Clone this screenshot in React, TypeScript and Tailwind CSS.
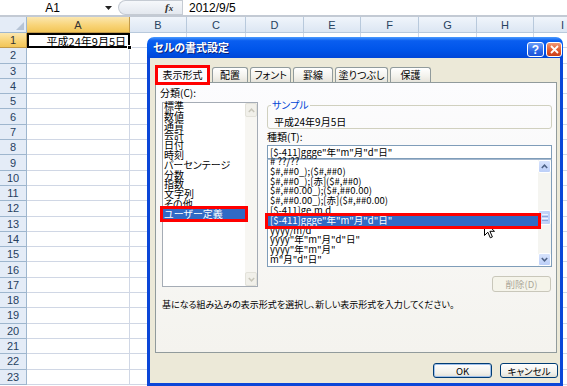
import React from "react";

const cols = [
  { l: "A", c: "w-[103px]" },
  { l: "B", c: "w-[57px]" },
  { l: "C", c: "w-[59px]" },
  { l: "D", c: "w-[58px]" },
  { l: "E", c: "w-[57px]" },
  { l: "F", c: "w-[58px]" },
  { l: "G", c: "w-[58px]" },
  { l: "H", c: "w-[57px]" },
  { l: "I", c: "w-[58px]" },
];

const rows = Array.from({ length: 23 }, (_, i) => i + 1);

const categories = [
  "標準",
  "数値",
  "通貨",
  "会計",
  "日付",
  "時刻",
  "パーセンテージ",
  "分数",
  "指数",
  "文字列",
  "その他",
  "ユーザー定義",
];

const types = [
  "# ??/??",
  "$#,##0_);($#,##0)",
  "$#,##0_);[赤]($#,##0)",
  "$#,##0.00_);($#,##0.00)",
  "$#,##0.00_);[赤]($#,##0.00)",
  "[$-411]ge.m.d",
  '[$-411]ggge"年"m"月"d"日"',
  "yyyy/m/d",
  'yyyy"年"m"月"d"日"',
  'yyyy"年"m"月"',
  'm"月"d"日"',
];

function Chevron({ up, color }: { up: boolean; color: string }) {
  return (
    <svg width="7" height="5" viewBox="0 0 7 5">
      <polyline
        points={up ? "0.8,4 3.5,1.2 6.2,4" : "0.8,1 3.5,3.8 6.2,1"}
        fill="none"
        stroke={color}
        strokeWidth="1.5"
      />
    </svg>
  );
}

function Tab({ label, w }: { label: string; w: string }) {
  return (
    <div
      className={`${w} h-[15px] flex items-center justify-center border border-b-0 border-[#919b9c] rounded-t-[3px] bg-[linear-gradient(to_bottom,#ffffff,#f3f2ec_60%,#e6e4db)] text-[10px] leading-[12px] text-black`}
    >
      {label}
    </div>
  );
}

export default function App() {
  return (
    <div className="relative w-[567px] h-[386px] overflow-hidden bg-white font-['Noto_Sans_CJK_JP',sans-serif] [font-feature-settings:'palt']">
      {/* formula bar */}
      <div className="h-[15px] flex items-center bg-white">
        <div className="w-[101px] text-center text-[12px] leading-[14px] font-['Liberation_Sans',sans-serif] text-black pl-[4px]">
          A1
        </div>
        <svg width="7" height="4" viewBox="0 0 7 4" className="ml-[4px]">
          <polygon points="0,0 7,0 3.5,4" fill="#222" />
        </svg>
        <div className="ml-[6px] h-[15px] w-[64px] flex items-center rounded-l-full border border-r-0 border-[#c5cbd3] bg-[linear-gradient(to_bottom,#f6f8fb,#e3e8ef)]">
          <span className="ml-[46px] text-[11px] leading-[12px] italic font-bold font-['Liberation_Serif',serif] text-[#333]">
            f<span className="text-[9px]">x</span>
          </span>
        </div>
        <div className="h-[15px] w-px bg-[#c5cbd3]" />
        <span className="ml-[6px] text-[12px] leading-[14px] font-['Liberation_Sans',sans-serif] text-black">
          2012/9/5
        </span>
      </div>
      <div className="h-[2px] bg-[#c3cad4]" />

      {/* header row */}
      <div className="flex h-[16px] font-['Liberation_Sans',sans-serif]">
        <div className="w-[27px] shrink-0 bg-[#e4ecf7] border-r border-b border-[#9eb6ce] flex items-end justify-end pr-[2px] pb-[2px]">
          <svg width="8" height="8" viewBox="0 0 8 8">
            <polygon points="8,0 8,8 0,8" fill="#b6c4d6" />
          </svg>
        </div>
        {cols.map((c) => (
          <div
            key={c.l}
            className={`${c.c} shrink-0 flex items-center justify-center text-[11px] leading-[12px] border-r border-b ${
              c.l === "A"
                ? "bg-[linear-gradient(to_bottom,#fbe7b0,#f8d478_55%,#f2c557)] border-[#c29a49] text-[#333]"
                : "bg-[linear-gradient(to_bottom,#f0f5fb,#dce6f3)] border-[#b8c9dc] text-[#27415f]"
            }`}
          >
            {c.l}
          </div>
        ))}
      </div>

      {/* grid rows */}
      {rows.map((r) => (
        <div key={r} className="flex h-[15.3px]">
          <div
            className={`w-[27px] shrink-0 flex items-center justify-center text-[11px] leading-[12px] font-['Liberation_Sans',sans-serif] border-r border-b ${
              r === 1
                ? "bg-[linear-gradient(to_bottom,#fbe7b0,#f8d478_55%,#f2c557)] border-[#c29a49] text-[#333]"
                : "bg-[#e4ecf7] border-[#9eb6ce] text-[#27415f]"
            }`}
          >
            {r}
          </div>
          {cols.map((c) =>
            r === 1 && c.l === "A" ? (
              <div
                key={c.l}
                className={`${c.c} shrink-0 relative border-2 border-black flex items-center justify-end pr-[2px] text-[11px] leading-[12px] text-black [font-feature-settings:normal]`}
              >
                平成24年9月5日
                <div className="absolute right-[-4px] bottom-[-4px] w-[5px] h-[5px] bg-black border border-white" />
              </div>
            ) : (
              <div key={c.l} className={`${c.c} shrink-0 border-r border-b border-[#d0d7e5]`} />
            )
          )}
        </div>
      ))}

      {/* dialog */}
      <div className="absolute left-[147px] top-[37px] w-[416px] h-[349px] flex flex-col">
        {/* title bar */}
        <div className="h-[21px] shrink-0 rounded-t-[7px] bg-[linear-gradient(to_bottom,#4a9bff,#0a5ef0_18%,#0055ea_60%,#0046d8)] flex items-center pr-[1px]">
          <span className="pl-[6px] text-[11px] leading-[13px] font-bold text-white [text-shadow:1px_1px_0_#0a1f7a] flex-1">
            セルの書式設定
          </span>
          <div className="self-end mb-[1px] flex gap-[2px]">
            <div className="w-[17px] h-[15px] rounded-[3px] border border-white bg-[linear-gradient(to_bottom,#6a9cf8,#2c68e8_60%,#1d53d6)] flex items-center justify-center text-white text-[12px] leading-[12px] font-bold font-['Liberation_Sans',sans-serif]">
              ?
            </div>
            <div className="w-[16px] h-[15px] rounded-[3px] border border-white bg-[linear-gradient(to_bottom,#f09a78,#e2582c_55%,#c8401c)] flex items-center justify-center">
              <svg width="9" height="9" viewBox="0 0 9 9">
                <path d="M1 1 L8 8 M8 1 L1 8" stroke="white" strokeWidth="1.8" />
              </svg>
            </div>
          </div>
        </div>

        {/* body */}
        <div className="flex-1 bg-[#ece9d8] border-x-[3px] border-b-[3px] border-[#0b46d8] flex flex-col">
          {/* tabs */}
          <div className="mt-[7px] h-[17px] flex items-end pl-[5px] gap-[2px]">
            <div className="ml-[3px] mr-[3px] w-[49px] h-[14px] flex items-center justify-center bg-[#fcfcfe] text-[10px] leading-[12px] text-black outline-[3px] outline-solid outline-[#ff0000] relative z-10">
              表示形式
            </div>
            <Tab label="配置" w="w-[36px]" />
            <Tab label="フォント" w="w-[41px]" />
            <Tab label="罫線" w="w-[40px]" />
            <Tab label="塗りつぶし" w="w-[53px]" />
            <Tab label="保護" w="w-[41px]" />
          </div>

          {/* panel */}
          <div className="ml-[5px] w-[402px] h-[271px] border border-[#919b9c] bg-[linear-gradient(to_bottom,#fcfcfe,#f4f3ee)] pt-[4px] pl-[4px] flex flex-col">
            <div className="h-[205px] flex">
              {/* left column */}
              <div className="w-[98px] flex flex-col">
                <div className="h-[12px] text-[10px] leading-[12px] text-black">分類(C):</div>
                <div className="ml-[2px] mt-[3px] w-[96px] h-[185px] border border-[#a5acb5] bg-white flex">
                  <div className="flex-1 flex flex-col -mt-[2px]">
                    {categories.map((c) => (
                      <div
                        key={c}
                        className={`h-[9.8px] leading-[9.8px] text-[10px] pl-[1px] whitespace-nowrap ${
                          c === "ユーザー定義"
                            ? "bg-[#316ac5] text-white outline-[3px] outline-solid outline-[#ff0000] relative z-10"
                            : "text-black"
                        }`}
                      >
                        {c}
                      </div>
                    ))}
                  </div>
                  <div className="w-[12px] flex flex-col bg-[#f7f6f2]">
                    <div className="h-[14px] border border-[#e3e2da] rounded-[2px] bg-[#f1f0ea] flex items-center justify-center">
                      <Chevron up color="#c9c7bb" />
                    </div>
                    <div className="flex-1" />
                    <div className="h-[14px] border border-[#e3e2da] rounded-[2px] bg-[#f1f0ea] flex items-center justify-center">
                      <Chevron up={false} color="#c9c7bb" />
                    </div>
                  </div>
                </div>
              </div>

              {/* right column */}
              <div className="ml-[9px] w-[285px] flex flex-col">
                <fieldset className="mt-[12px] h-[30px] border border-[#d0d0bf] rounded-[3px]">
                  <legend className="ml-[3px] px-[1px] text-[10px] leading-[12px] text-[#0046d5]">サンプル</legend>
                  <div className="pl-[6px] mt-[5px] text-[10px] leading-[12px] text-black [font-feature-settings:normal]">
                    平成24年9月5日
                  </div>
                </fieldset>
                <div className="mt-[2px] h-[12px] text-[10px] leading-[12px] text-black">種類(T):</div>
                <div className="mt-[2px] h-[14px] border border-[#7f9db9] bg-white px-[2px] text-[9.5px] leading-[12px] text-black whitespace-nowrap">
                  [$-411]ggge"年"m"月"d"日"
                </div>
                <div className="h-[108px] border border-[#7f9db9] border-t-[#a5b8cf] bg-white flex">
                  <div className="flex-1 flex flex-col -mt-[3px]">
                    {types.map((t) => (
                      <div
                        key={t}
                        className={`h-[9.8px] leading-[9.8px] text-[9.5px] pl-[2px] whitespace-nowrap ${
                          t === '[$-411]ggge"年"m"月"d"日"'
                            ? "bg-[#316ac5] text-white outline-[3px] outline-solid outline-[#ff0000] relative z-10"
                            : "text-black"
                        }`}
                      >
                        {t}
                      </div>
                    ))}
                  </div>
                  <div className="w-[13px] flex flex-col bg-[#f5f5f1]">
                    <div className="h-[13px] border border-white rounded-[2px] bg-[linear-gradient(to_bottom,#d7e3fc,#bccff8)] flex items-center justify-center">
                      <Chevron up color="#4d6185" />
                    </div>
                    <div className="h-[37px]" />
                    <div className="h-[15px] border border-white rounded-[2px] bg-[linear-gradient(to_right,#c9d8fb,#bccff8)] flex flex-col items-center justify-center gap-[1px]">
                      <div className="w-[6px] h-px bg-[#eef3ff]" />
                      <div className="w-[6px] h-px bg-[#8ca6dc]" />
                      <div className="w-[6px] h-px bg-[#eef3ff]" />
                      <div className="w-[6px] h-px bg-[#8ca6dc]" />
                    </div>
                    <div className="flex-1" />
                    <div className="h-[13px] border border-white rounded-[2px] bg-[linear-gradient(to_bottom,#d7e3fc,#bccff8)] flex items-center justify-center">
                      <Chevron up={false} color="#4d6185" />
                    </div>
                  </div>
                </div>
                <div className="self-end mr-[1px] mt-[9px] w-[59px] h-[16px] border border-[#c9c7ba] rounded-[3px] bg-[#f5f4ea] flex items-center justify-center text-[9.5px] leading-[12px] text-[#aca899]">
                  削除(D)
                </div>
              </div>
            </div>
            <div className="mt-[7px] ml-[2px] h-[12px] text-[9px] leading-[12px] text-black whitespace-nowrap">
              基になる組み込みの表示形式を選択し、新しい表示形式を入力してください。
            </div>
          </div>

          {/* buttons */}
          <div className="mt-[10px] flex justify-end gap-[8px] pr-[2px]">
            <div className="w-[59px] h-[15px] rounded-[3px] border border-[#003c74] bg-[linear-gradient(to_bottom,#ffffff,#f0f0ea_70%,#e1dfd5)] shadow-[inset_0_0_0_1px_#9fc0ea] flex items-center justify-center text-[9.5px] leading-[12px] text-black">
              OK
            </div>
            <div className="w-[58px] h-[15px] rounded-[3px] border border-[#003c74] bg-[linear-gradient(to_bottom,#ffffff,#f0f0ea_70%,#e1dfd5)] flex items-center justify-center text-[9.5px] leading-[12px] text-black">
              キャンセル
            </div>
          </div>
        </div>
      </div>

      {/* mouse cursor */}
      <svg className="absolute left-[484px] top-[221px]" width="12" height="18" viewBox="0 0 12 18">
        <path
          d="M0.5 0.5 L0.5 14.5 L3.8 11.2 L6.3 16.8 L8.4 15.9 L5.9 10.3 L10.5 10.3 Z"
          fill="white"
          stroke="black"
          strokeWidth="1"
        />
      </svg>
    </div>
  );
}
